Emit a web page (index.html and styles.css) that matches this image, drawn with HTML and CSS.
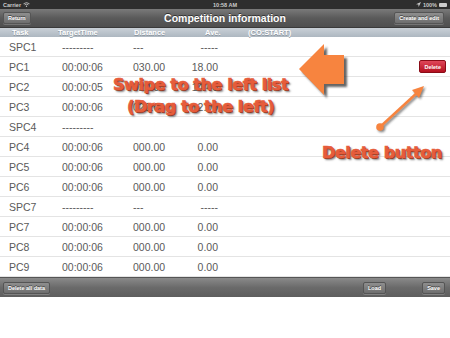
FILE: index.html
```html
<!DOCTYPE html>
<html>
<head>
    <title>Competition information</title>
    <meta name="viewport" content="width=device-width, initial-scale=1.0">
    <link rel="stylesheet" href="styles.css">
</head>
<body>
    <div class="screen">
        <div class="status-bar">
            <span class="carrier">Carrier
                <svg width="7" height="5" viewBox="0 0 7 5"><path d="M0.5 1.8 Q3.5 -0.6 6.5 1.8 M1.6 2.9 Q3.5 1.4 5.4 2.9" stroke="#ccc" stroke-width="0.8" fill="none"/><circle cx="3.5" cy="4.2" r="0.7" fill="#ccc"/></svg>
            </span>
            <span class="clock">10:58 AM</span>
            <span class="battery">
                <svg width="5" height="5" viewBox="0 0 5 5"><path d="M5 0 L0 2.2 L2.4 2.4 L2.6 5 Z" fill="#ccc"/></svg>
                100%
                <span class="battery-icon"></span>
            </span>
        </div>
        <div class="nav-bar">
            <button class="bar-btn">Return</button>
            <div class="nav-title">Competition information</div>
            <button class="bar-btn">Create and edit</button>
        </div>
        <div class="list-head">
            <span class="h-task">Task</span>
            <span class="h-time">TargetTime</span>
            <span class="h-dist">Distance</span>
            <span class="h-ave">Ave.</span>
            <span class="h-co">(CO:START)</span>
        </div>
        <div class="list" id="list"></div>
        <div class="tool-bar">
            <button class="bar-btn">Delete all data</button>
            <div class="spacer"></div>
            <button class="bar-btn load-btn">Load</button>
            <button class="bar-btn">Save</button>
        </div>

        <svg class="marks" width="450" height="338" viewBox="0 0 450 338">
            <defs>
                <filter id="shade" x="-20%" y="-20%" width="150%" height="150%">
                    <feGaussianBlur stdDeviation="1.2"/>
                </filter>
            </defs>
            <polygon points="299,69 324,44 324,55 344,55 344,84 324,84 324,95" fill="#333" opacity="0.75" transform="translate(3,3)" filter="url(#shade)"/>
            <polygon points="299,69 324,44 324,55 344,55 344,84 324,84 324,95" fill="#f7843f"/>
            <g transform="translate(1.5,1.5)" opacity="0.6" filter="url(#shade)">
                <line x1="380" y1="127" x2="418" y2="92" stroke="#333" stroke-width="2.5"/>
                <polygon points="424,86 419,98 412,90" fill="#333"/>
                <circle cx="380" cy="127" r="3.8" fill="#333"/>
            </g>
            <line x1="380" y1="127" x2="418" y2="92" stroke="#f7843f" stroke-width="2.5"/>
            <polygon points="424,86 419,98 412,90" fill="#f7843f"/>
            <circle cx="380" cy="127" r="3.8" fill="#f7843f"/>
        </svg>
        <div class="note note-swipe">Swipe to the left list<br>(Drag to the left)</div>
        <div class="note note-delete">Delete button</div>
    </div>
    <script>
        const rows = [
            ['SPC1', '---------', '---', '-----'],
            ['PC1', '00:00:06', '030.00', '18.00', true],
            ['PC2', '00:00:05', '020.00', '14.40'],
            ['PC3', '00:00:06', '020.00', '12.00'],
            ['SPC4', '---------', '', ''],
            ['PC4', '00:00:06', '000.00', '0.00'],
            ['PC5', '00:00:06', '000.00', '0.00'],
            ['PC6', '00:00:06', '000.00', '0.00'],
            ['SPC7', '---------', '---', '-----'],
            ['PC7', '00:00:06', '000.00', '0.00'],
            ['PC8', '00:00:06', '000.00', '0.00'],
            ['PC9', '00:00:06', '000.00', '0.00']
        ];
        const list = document.getElementById('list');
        rows.forEach(r => {
            const row = document.createElement('div');
            row.className = 'row';
            row.innerHTML =
                '<span class="c-task">' + r[0] + '</span>' +
                '<span class="c-time">' + r[1] + '</span>' +
                '<span class="c-dist">' + r[2] + '</span>' +
                '<span class="c-ave">' + r[3] + '</span>' +
                '<span class="spacer"></span>' +
                (r[4] ? '<button class="delete-btn">Delete</button>' : '');
            list.appendChild(row);
        });
    </script>
</body>
</html>
```

FILE: styles.css
```css
body {
    margin: 0;
    background-color: #fff;
    font-family: "Liberation Sans", Arial, sans-serif;
}
.screen {
    position: relative;
    width: 450px;
    height: 338px;
    overflow: hidden;
    background-color: #fff;
}
.status-bar {
    height: 9px;
    background-color: #2e2e2e;
    color: #ccc;
    font-size: 5.5px;
    font-weight: bold;
    display: flex;
    align-items: center;
    justify-content: space-between;
    padding: 0 3px;
    position: relative;
}
.carrier, .battery {
    display: flex;
    align-items: center;
    gap: 2px;
}
.clock {
    position: absolute;
    left: 0;
    right: 0;
    text-align: center;
}
.battery-icon {
    width: 8px;
    height: 4px;
    background-color: #ccc;
    border-radius: 1px;
}
.nav-bar {
    height: 19px;
    background: linear-gradient(#7a7a7a, #5a5a5a 50%, #4f4f4f);
    border-bottom: 1px solid #3a3a3a;
    box-sizing: border-box;
    display: flex;
    align-items: center;
    justify-content: space-between;
    padding: 0 6px 0 3px;
    position: relative;
}
.nav-title {
    position: absolute;
    left: 0;
    right: 0;
    text-align: center;
    color: #fff;
    font-size: 10.5px;
    font-weight: bold;
    text-shadow: 0 -1px 0 #333;
}
.bar-btn {
    position: relative;
    z-index: 1;
    height: 12px;
    padding: 0 4px;
    font-family: "Liberation Sans", Arial, sans-serif;
    font-size: 5.5px;
    font-weight: bold;
    color: #fff;
    background: linear-gradient(#8e8e8e, #6e6e6e);
    border: 1px solid #555;
    border-radius: 2px;
    box-shadow: 0 1px 0 rgba(255, 255, 255, 0.2);
    text-shadow: 0 -1px 0 #444;
}
.list-head {
    height: 9px;
    background: linear-gradient(#c9d0d7, #adb7c0);
    color: #fff;
    font-size: 7.5px;
    font-weight: bold;
    display: flex;
    align-items: center;
    text-shadow: 0 1px 0 #8c96a0;
}
.h-task {
    padding-left: 12px;
    width: 46px;
}
.h-time {
    width: 76px;
}
.h-dist {
    width: 71px;
}
.h-ave {
    width: 43px;
}
.list {
    color: #5a5a5a;
    font-size: 10.5px;
}
.row {
    height: 20px;
    box-sizing: border-box;
    border-bottom: 1px solid #e4e4e4;
    display: flex;
    align-items: center;
    padding: 0 4px 0 9px;
}
.c-task {
    width: 53px;
}
.c-time {
    width: 71px;
}
.c-dist {
    width: 50px;
}
.c-ave {
    width: 35px;
    text-align: right;
}
.spacer {
    flex: 1;
}
.delete-btn {
    height: 13px;
    padding: 0 4px;
    font-family: "Liberation Sans", Arial, sans-serif;
    font-size: 5.5px;
    font-weight: bold;
    color: #fff;
    background: linear-gradient(#e0475a, #b3101f);
    border: 1px solid #8a0c17;
    border-radius: 2px;
}
.tool-bar {
    height: 20px;
    background: linear-gradient(#8a8a8a, #6a6a6a 50%, #5e5e5e);
    border-top: 1px solid #555;
    box-sizing: border-box;
    display: flex;
    align-items: center;
    padding: 0 5px 0 3px;
}
.load-btn {
    margin-right: 36px;
}
.marks {
    position: absolute;
    left: 0;
    top: 0;
}
.note {
    position: absolute;
    font-family: "DejaVu Sans", sans-serif;
    font-weight: bold;
    color: #e65c3b;
    -webkit-text-stroke: 0.6px #e65c3b;
    text-shadow: 1px 1px 0 #8a3a24, 2px 2px 2px rgba(0, 0, 0, 0.5);
    white-space: nowrap;
    letter-spacing: -0.4px;
}
.note-swipe {
    left: 113px;
    top: 74px;
    font-size: 16px;
    line-height: 22px;
    text-align: center;
}
.note-delete {
    left: 322px;
    top: 143px;
    font-size: 16px;
    line-height: 20px;
}
```
